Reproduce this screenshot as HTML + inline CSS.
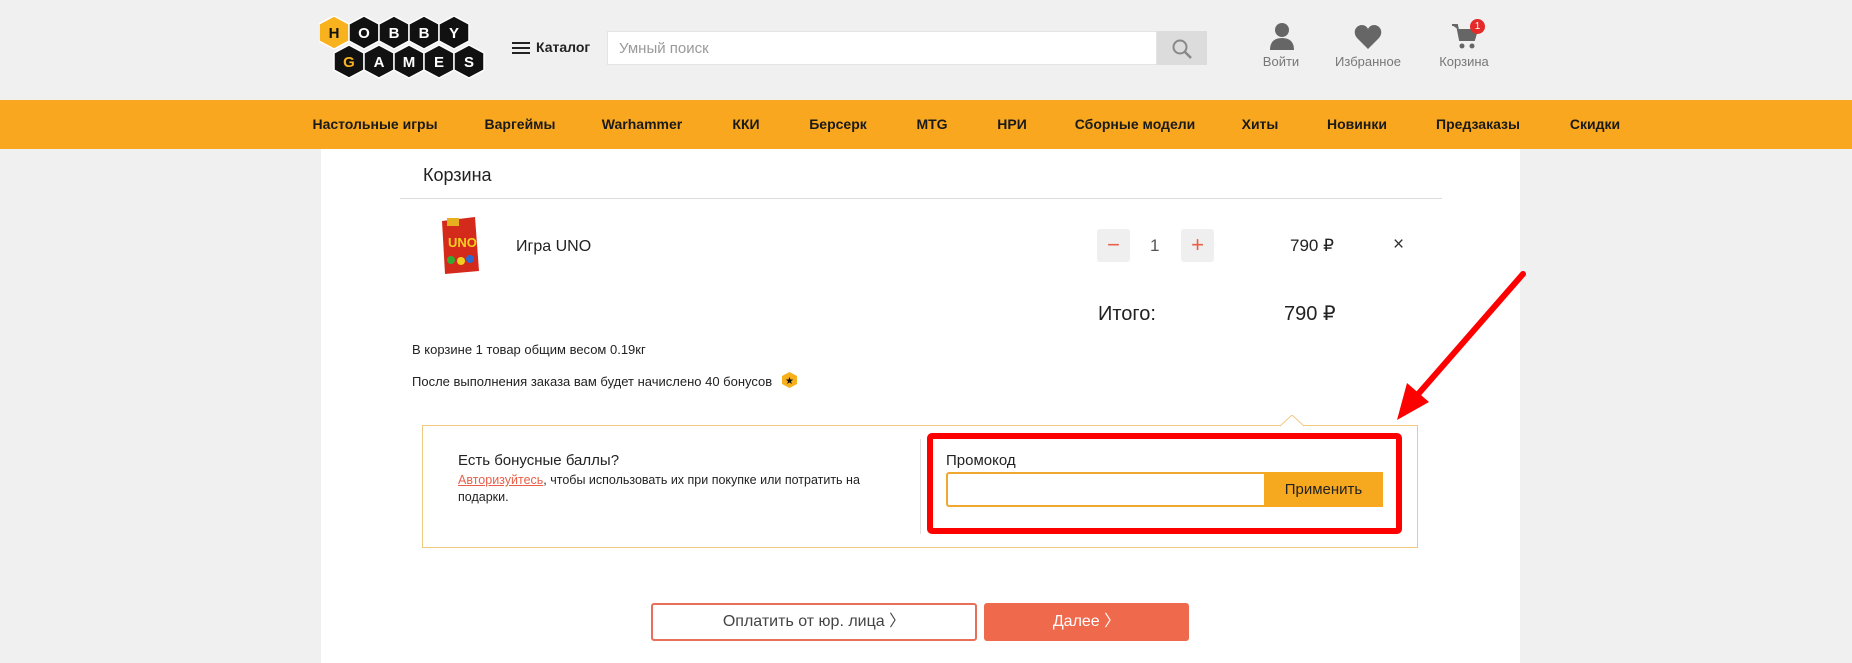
<!DOCTYPE html>
<html><head><meta charset="utf-8"><style>
*{margin:0;padding:0;box-sizing:border-box}
body{width:1852px;height:663px;overflow:hidden;background:#f0f0f0;font-family:"Liberation Sans",sans-serif;position:relative;color:#222}
.a{position:absolute;white-space:nowrap}
.nav{position:absolute;left:0;top:100px;width:1852px;height:49px;background:#f8a71e}
.nav span{position:absolute;top:16px;font-size:14px;font-weight:bold;color:#1a1a1a;transform:translateX(-50%)}
.main{position:absolute;left:321px;top:149px;width:1199px;height:514px;background:#fff}
.ic{color:#777;font-size:13px;transform:translateX(-50%)}
</style></head><body>
<svg class="a" style="left:319px;top:16px" width="170" height="64" viewBox="0 0 170 64">
<g stroke="#fff" stroke-width="1.5">
<polygon points="15,0 30,8 30,25 15,33 0,25 0,8" fill="#f8b21e"/>
<polygon points="45,0 60,8 60,25 45,33 30,25 30,8" fill="#111"/>
<polygon points="75,0 90,8 90,25 75,33 60,25 60,8" fill="#111"/>
<polygon points="105,0 120,8 120,25 105,33 90,25 90,8" fill="#111"/>
<polygon points="135,0 150,8 150,25 135,33 120,25 120,8" fill="#111"/>
<polygon points="30,29 45,37 45,54 30,62 15,54 15,37" fill="#111"/>
<polygon points="60,29 75,37 75,54 60,62 45,54 45,37" fill="#111"/>
<polygon points="90,29 105,37 105,54 90,62 75,54 75,37" fill="#111"/>
<polygon points="120,29 135,37 135,54 120,62 105,54 105,37" fill="#111"/>
<polygon points="150,29 165,37 165,54 150,62 135,54 135,37" fill="#111"/>
</g>
<g font-family="Liberation Sans" font-weight="bold" font-size="15" text-anchor="middle">
<text x="15" y="22" fill="#111">H</text><text x="45" y="22" fill="#fff">O</text><text x="75" y="22" fill="#fff">B</text><text x="105" y="22" fill="#fff">B</text><text x="135" y="22" fill="#fff">Y</text>
<text x="30" y="51" fill="#f8b21e">G</text><text x="60" y="51" fill="#fff">A</text><text x="90" y="51" fill="#fff">M</text><text x="120" y="51" fill="#fff">E</text><text x="150" y="51" fill="#fff">S</text>
</g></svg>
<svg class="a" style="left:512px;top:41px" width="18" height="14"><rect y="1" width="18" height="2" fill="#222"/><rect y="6" width="18" height="2" fill="#222"/><rect y="11" width="18" height="2" fill="#222"/></svg>
<div class="a" style="left:536px;top:39px;font-size:14px;font-weight:bold">Каталог</div>
<div class="a" style="left:607px;top:31px;width:550px;height:34px;background:#fff;border:1px solid #e4e4e4"></div>
<div class="a" style="left:619px;top:40px;font-size:15px;color:#999">Умный поиск</div>
<div class="a" style="left:1157px;top:31px;width:50px;height:34px;background:#dcdcdc"></div>
<svg class="a" style="left:1171px;top:38px" width="22" height="22"><circle cx="9" cy="9" r="6.5" fill="none" stroke="#888" stroke-width="2"/><line x1="14" y1="14" x2="20" y2="20" stroke="#888" stroke-width="2.5"/></svg>
<svg class="a" style="left:1269px;top:22px" width="26" height="28"><circle cx="13" cy="8" r="7" fill="#666"/><path d="M1 28 Q1 16 13 16 Q25 16 25 28Z" fill="#666"/></svg>
<div class="a ic" style="left:1281px;top:54px">Войти</div>
<svg class="a" style="left:1354px;top:24px" width="28" height="26"><path d="M14 25 L3 14 C-2 8 2 1 8 1 C11 1 13 3 14 5 C15 3 17 1 20 1 C26 1 30 8 25 14Z" fill="#666"/></svg>
<div class="a ic" style="left:1368px;top:54px">Избранное</div>
<svg class="a" style="left:1451px;top:22px" width="28" height="28"><path d="M1 3 H6 L9 18 H23 L26 8 H8" fill="#666" stroke="#666" stroke-width="2"/><circle cx="11" cy="24" r="2.5" fill="#666"/><circle cx="21" cy="24" r="2.5" fill="#666"/></svg>
<div class="a" style="left:1470px;top:19px;width:15px;height:15px;border-radius:50%;background:#e52a2a;color:#fff;font-size:10px;text-align:center;line-height:15px">1</div>
<div class="a ic" style="left:1464px;top:54px">Корзина</div>
<div class="nav">
<span style="left:375px">Настольные игры</span><span style="left:520px">Варгеймы</span><span style="left:642px">Warhammer</span><span style="left:746px">ККИ</span><span style="left:838px">Берсерк</span><span style="left:932px">MTG</span><span style="left:1012px">НРИ</span><span style="left:1135px">Сборные модели</span><span style="left:1260px">Хиты</span><span style="left:1357px">Новинки</span><span style="left:1478px">Предзаказы</span><span style="left:1595px">Скидки</span>
</div>
<div class="main"></div>
<div class="a" style="left:423px;top:165px;font-size:18px">Корзина</div>
<div class="a" style="left:400px;top:198px;width:1042px;height:1px;background:#ddd"></div>
<svg class="a" style="left:439px;top:215px" width="42" height="60"><path d="M3 6 L36 2 L40 56 L6 59Z" fill="#d42a1c"/><rect x="8" y="3" width="12" height="8" fill="#e6b020"/><text x="9" y="32" font-family="Liberation Sans" font-weight="bold" font-size="13" fill="#f5d020">UNO</text><circle cx="12" cy="45" r="4" fill="#3a3"/><circle cx="22" cy="46" r="4" fill="#f2d020"/><circle cx="31" cy="44" r="4" fill="#2b6bd0"/></svg>
<div class="a" style="left:516px;top:238px;font-size:16px">Игра UNO</div>
<div class="a" style="left:1097px;top:229px;width:33px;height:33px;background:#efefef;border-radius:3px;color:#e86048;font-size:22px;text-align:center;line-height:31px">−</div>
<div class="a" style="left:1150px;top:236px;font-size:17px;color:#555">1</div>
<div class="a" style="left:1181px;top:229px;width:33px;height:33px;background:#efefef;border-radius:3px;color:#e86048;font-size:22px;text-align:center;line-height:31px">+</div>
<div class="a" style="left:1290px;top:236px;font-size:17px">790 ₽</div>
<div class="a" style="left:1393px;top:234px;font-size:19px;color:#333">×</div>
<div class="a" style="left:1098px;top:303px;font-size:20px">Итого:</div>
<div class="a" style="left:1284px;top:301px;font-size:20px">790 ₽</div>
<div class="a" style="left:412px;top:342px;font-size:13px">В корзине 1 товар общим весом 0.19кг</div>
<div class="a" style="left:412px;top:374px;font-size:13px">После выполнения заказа вам будет начислено 40 бонусов</div>
<svg class="a" style="left:782px;top:372px" width="15" height="16"><polygon points="7.5,0 15,4 15,12 7.5,16 0,12 0,4" fill="#f5b01c"/><text x="7.5" y="12" font-size="10" text-anchor="middle" fill="#111">★</text></svg>
<div class="a" style="left:422px;top:425px;width:996px;height:123px;border:1px solid #f0c880"></div>
<svg class="a" style="left:1280px;top:415px" width="24" height="12"><path d="M0 11 L12 0 L24 11" fill="#fff" stroke="#f0c880"/></svg>
<div class="a" style="left:458px;top:452px;font-size:15px">Есть бонусные баллы?</div>
<div class="a" style="left:458px;top:472px;font-size:12.5px;line-height:17px;white-space:normal;width:440px"><span style="color:#e8604a;text-decoration:underline">Авторизуйтесь</span>, чтобы использовать их при покупке или потратить на подарки.</div>
<div class="a" style="left:920px;top:439px;width:1px;height:95px;background:#e0e0e0"></div>
<div class="a" style="left:927px;top:433px;width:475px;height:101px;border:6px solid #f00;border-radius:5px"></div>
<div class="a" style="left:946px;top:452px;font-size:15px">Промокод</div>
<div class="a" style="left:946px;top:472px;width:320px;height:35px;border:2px solid #f0a830;border-radius:3px 0 0 3px"></div>
<div class="a" style="left:1264px;top:472px;width:119px;height:35px;background:#f6a81e;font-size:15px;text-align:center;line-height:35px">Применить</div>
<svg class="a" style="left:1385px;top:265px" width="150" height="165"><line x1="138" y1="9" x2="28" y2="135" stroke="#f00" stroke-width="6" stroke-linecap="round"/><polygon points="12,155 22,118 44,137" fill="#f00"/></svg>
<div class="a" style="left:651px;top:603px;width:326px;height:38px;border:2px solid #e8705a;border-radius:3px;font-size:16px;color:#444;text-align:center;line-height:34px">Оплатить от юр. лица 〉</div>
<div class="a" style="left:984px;top:603px;width:205px;height:38px;background:#ef6a4c;border-radius:3px;font-size:16px;color:#fff;text-align:center;line-height:38px">Далее 〉</div>
</body></html>
